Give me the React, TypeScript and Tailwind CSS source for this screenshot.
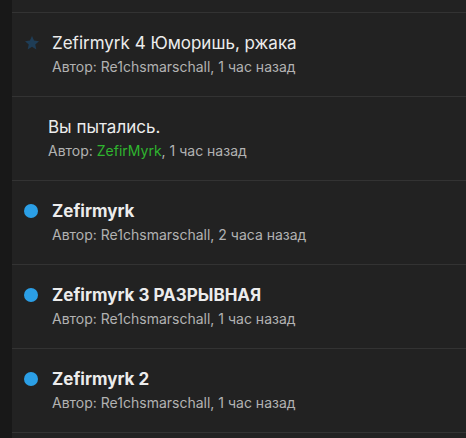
import React from 'react';

type Topic = {
    title: string;
    author: string;
    time: string;
    marker: 'star' | 'dot' | 'none';
    bold?: boolean;
    authorGreen?: boolean;
};

const topics: Topic[] = [
    { title: 'Zefirmyrk 4 Юморишь, ржака', author: 'Re1chsmarschall', time: '1 час назад', marker: 'star' },
    { title: 'Вы пытались.', author: 'ZefirMyrk', time: '1 час назад', marker: 'none', authorGreen: true },
    { title: 'Zefirmyrk', author: 'Re1chsmarschall', time: '2 часа назад', marker: 'dot', bold: true },
    { title: 'Zefirmyrk 3 РАЗРЫВНАЯ', author: 'Re1chsmarschall', time: '1 час назад', marker: 'dot', bold: true },
    { title: 'Zefirmyrk 2', author: 'Re1chsmarschall', time: '1 час назад', marker: 'dot', bold: true },
];

const Marker = ({ kind }: { kind: Topic['marker'] }) => {
    if (kind === 'star') {
        return (
            <svg width="16" height="16" viewBox="0 0 24 24" className="shrink-0">
                <path
                    d="M12 1.5l3.1 6.9 7.4.8-5.6 5 1.6 7.4L12 17.8l-6.5 3.8 1.6-7.4-5.6-5 7.4-.8z"
                    fill="#1f3d56"
                />
            </svg>
        );
    }
    if (kind === 'dot') {
        return <span className="block w-[14px] h-[14px] rounded-full bg-[#2b9fe6] shrink-0" />;
    }
    return null;
};

const TopicRow = ({ topic }: { topic: Topic }) => (
    <div className="h-[84px] border-b border-[#333333] flex items-start pt-[20px]">
        {topic.marker === 'none' ? (
            <div className="w-[36px]" />
        ) : (
            <div className="w-[40px] h-5 flex items-center pl-[12px]">
                <Marker kind={topic.marker} />
            </div>
        )}
        <div className="flex flex-col">
            <div className={`text-[17px] leading-5 text-[#ececec] ${topic.bold ? 'font-bold' : 'font-normal'}`}>
                {topic.title}
            </div>
            <div className="mt-1 text-[14px] leading-5 text-[#b2b2b2]">
                Автор:{' '}
                <span className={topic.authorGreen ? 'text-[#2fb52f]' : ''}>{topic.author}</span>, {topic.time}
            </div>
        </div>
    </div>
);

export default function App() {
    return (
        <div className="w-[466px] h-[438px] overflow-hidden flex bg-[#181818]" style={{ fontFamily: 'Inter, "Noto Sans", sans-serif' }}>
            <div className="w-[12px] shrink-0" />
            <div className="flex-1 bg-[#222222]">
                <div className="h-[13px] border-b border-[#333333]" />
                {topics.map((t, i) => (
                    <TopicRow key={i} topic={t} />
                ))}
            </div>
        </div>
    );
}
